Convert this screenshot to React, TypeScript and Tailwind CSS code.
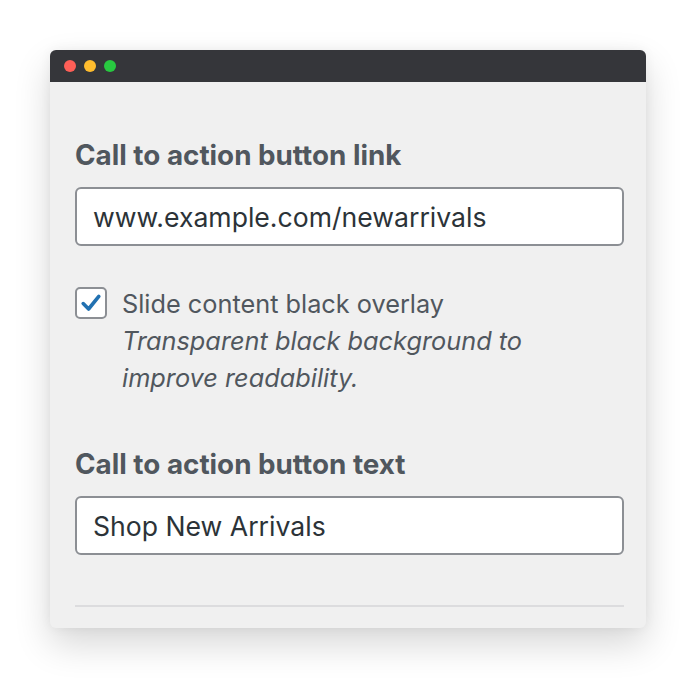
import React from "react";

const font = { fontFamily: "Inter, 'Noto Sans', sans-serif" };

function Field({ label, value }: { label: string; value: string }) {
  return (
    <div className="flex flex-col">
      <label className="text-[27.8px] font-bold leading-[30px] text-[#50575e]">{label}</label>
      <input
        readOnly
        value={value}
        className="mt-[17px] h-[59px] w-full rounded-[6px] border-2 border-[#8c8f94] bg-white px-[16px] text-[26.6px] text-[#2c3338] outline-none"
      />
    </div>
  );
}

export default function App() {
  return (
    <div className="min-h-[678px] w-[696px] bg-white pt-[50px]" style={font}>
      <div className="mx-auto w-[596px] overflow-hidden rounded-[6px] bg-[#f0f0f0] shadow-[0_16px_36px_rgba(0,0,0,0.16),0_0_12px_rgba(0,0,0,0.05)]">
        <div className="flex h-[32px] items-center gap-[8px] bg-[#35363a] px-[14px]">
          <span className="h-[12px] w-[12px] rounded-full bg-[#fe5f57]" />
          <span className="h-[12px] w-[12px] rounded-full bg-[#febc2e]" />
          <span className="h-[12px] w-[12px] rounded-full bg-[#28c840]" />
        </div>
        <div className="pt-[58px] pr-[22px] pb-[21px] pl-[25px]">
          <Field label="Call to action button link" value="www.example.com/newarrivals" />
          <div className="mt-[40px] flex gap-[15px]">
            <span className="mt-[1px] flex h-[32px] w-[32px] shrink-0 items-center justify-center rounded-[5px] border-2 border-[#8c8f94] bg-white">
              <svg viewBox="0 0 20 20" className="h-[24px] w-[24px]">
                <path d="M3.5 10.5 L8 15 L16.5 4.5" fill="none" stroke="#2271b1" strokeWidth="3" strokeLinecap="round" strokeLinejoin="round" />
              </svg>
            </span>
            <div className="text-[25.3px] leading-[37px] text-[#50575e]">
              <div className="leading-[36px]">Slide content black overlay</div>
              <div className="italic">
                Transparent black background to
                <br />
                improve readability.
              </div>
            </div>
          </div>
          <div className="mt-[53px]">
            <Field label="Call to action button text" value="Shop New Arrivals" />
          </div>
          <div className="mt-[50px] h-[2px] bg-[#dcdcde]" />
        </div>
      </div>
    </div>
  );
}
